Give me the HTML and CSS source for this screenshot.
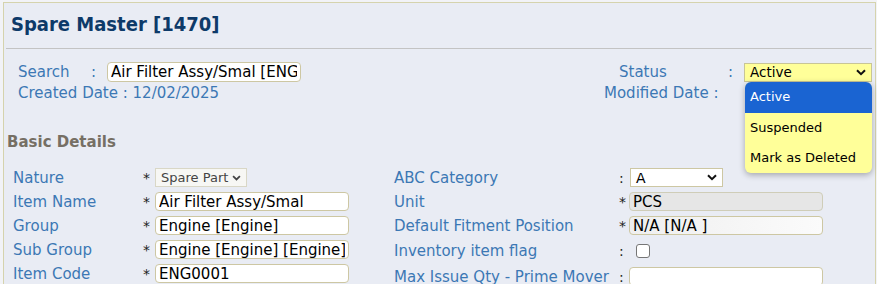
FILE: index.html
```html
<!DOCTYPE html>
<html lang="en">
<head>
    <meta charset="UTF-8">
    <meta name="viewport" content="width=device-width, initial-scale=1.0">
    <title>Spare Master</title>
    <link rel="stylesheet" href="styles.css">
</head>
<body>
    <div class="panel">
        <h1>Spare Master [1470]</h1>
        <hr class="rule">

        <div class="meta">
            <div class="meta-left">
                <div class="meta-row">
                    <span class="meta-label">Search</span>
                    <span class="colon">:</span>
                    <input type="text" class="search-box" value="Air Filter Assy/Smal [ENG0001]">
                </div>
                <div class="meta-row text-row">Created Date : 12/02/2025</div>
            </div>
            <div class="meta-right">
                <div class="meta-row">
                    <span class="status-label">Status</span>
                    <span class="colon">:</span>
                    <div class="status-wrap">
                        <div class="status-select">
                            <span>Active</span>
                            <svg class="chev" width="10" height="7" viewBox="0 0 10 7"><path d="M1 1.2 L5 5.2 L9 1.2" fill="none" stroke="#111" stroke-width="2"/></svg>
                        </div>
                        <ul class="status-menu">
                            <li class="picked">Active</li>
                            <li>Suspended</li>
                            <li>Mark as Deleted</li>
                        </ul>
                    </div>
                </div>
                <div class="meta-row text-row">Modified Date :</div>
            </div>
        </div>

        <h2>Basic Details</h2>

        <div class="form">
            <div class="col col-left">
                <label>Nature</label><span class="mark">*</span>
                <div class="field"><div class="small-select">Spare Part <svg width="9" height="6" viewBox="0 0 10 7"><path d="M1 1.2 L5 5.2 L9 1.2" fill="none" stroke="#444" stroke-width="2"/></svg></div></div>

                <label>Item Name</label><span class="mark">*</span>
                <div class="field"><input type="text" class="box" value="Air Filter Assy/Smal"></div>

                <label>Group</label><span class="mark">*</span>
                <div class="field"><input type="text" class="box" value="Engine [Engine]"></div>

                <label>Sub Group</label><span class="mark">*</span>
                <div class="field"><input type="text" class="box" value="Engine [Engine] [Engine]"></div>

                <label>Item Code</label><span class="mark">*</span>
                <div class="field"><input type="text" class="box" value="ENG0001"></div>
            </div>

            <div class="col col-right">
                <label>ABC Category</label><span class="mark">:</span>
                <div class="field"><div class="abc-select">A <svg width="10" height="7" viewBox="0 0 10 7"><path d="M1 1.2 L5 5.2 L9 1.2" fill="none" stroke="#111" stroke-width="2"/></svg></div></div>

                <label>Unit</label><span class="mark">*</span>
                <div class="field"><input type="text" class="box disabled" value="PCS" disabled></div>

                <label>Default Fitment Position</label><span class="mark">*</span>
                <div class="field"><input type="text" class="box readonly" value="N/A [N/A ]" readonly></div>

                <label>Inventory item flag</label><span class="mark">:</span>
                <div class="field"><span class="check"></span></div>

                <label>Max Issue Qty - Prime Mover</label><span class="mark">:</span>
                <div class="field"><input type="text" class="box" value=""></div>
            </div>
        </div>
    </div>
</body>
</html>
```

FILE: styles.css
```css
body {
    margin: 0;
    background-color: #f2f3f7;
    font-family: "DejaVu Sans", Verdana, sans-serif;
    font-size: 15px;
    overflow: hidden;
}
.panel {
    margin: 2px 1px 0 3px;
    height: 290px;
    background-color: #e9ecf4;
    border: 1px solid #d5d3ad;
    border-bottom: none;
    position: relative;
}
h1 {
    margin: 0;
    padding: 8px 0 0 7px;
    height: 36px;
    font-family: "DejaVu Sans Condensed", "DejaVu Sans", sans-serif;
    font-size: 20px;
    font-weight: bold;
    color: #0d3a69;
    line-height: 26px;
}
.rule {
    margin: 1px 3px 0 2px;
    border: none;
    border-top: 1px solid #c3c3c3;
    height: 0;
}
.meta {
    display: flex;
    justify-content: space-between;
    padding: 13px 0 0 14px;
    color: #3c78b4;
}
.meta-row {
    display: flex;
    align-items: center;
    height: 20px;
}
.text-row {
    height: 22px;
    line-height: 22px;
}
.meta-label {
    width: 73px;
}
.colon {
    width: 16px;
}
.search-box {
    width: 194px;
    height: 20px;
    box-sizing: border-box;
    border: 1px solid #cdc7a3;
    border-radius: 4px;
    padding: 0 3px;
    font: 15px "DejaVu Sans", sans-serif;
    color: #000;
    background: #fff;
}
.meta-right {
    width: 271px;
}
.status-label {
    width: 109px;
    padding-left: 15px;
}
.status-wrap {
    position: relative;
}
.status-select {
    display: flex;
    align-items: center;
    justify-content: space-between;
    width: 128px;
    height: 19px;
    box-sizing: border-box;
    padding: 0 5px;
    background-color: #ffff99;
    border: 1px solid #c8c596;
    font-size: 13.5px;
    color: #000;
}
.status-menu {
    position: absolute;
    top: 19px;
    left: 1px;
    width: 127px;
    margin: 0;
    padding: 0;
    list-style: none;
    background-color: #ffff99;
    border-radius: 6px;
    box-shadow: 0 2px 6px rgba(0, 0, 0, 0.3);
    overflow: hidden;
    z-index: 2;
}
.status-menu li {
    height: 30px;
    line-height: 30px;
    padding-left: 5px;
    font-size: 13px;
    color: #000;
}
.status-menu li.picked {
    height: 31px;
    background-color: #1a64d2;
    color: #fff;
}
h2 {
    margin: 0;
    padding: 29px 0 0 3px;
    height: 24px;
    font-size: 15px;
    font-weight: bold;
    color: #766f64;
}
.form {
    display: flex;
    padding: 11px 0 0 9px;
}
.col {
    display: grid;
    align-items: center;
    row-gap: 5px;
    color: #3c78b4;
}
.col-left {
    grid-template-columns: 130px 12px 194px;
    grid-auto-rows: 19px;
}
.col-right {
    margin-left: 45px;
    grid-template-columns: 225px 10px 194px;
    grid-template-rows: 19px 19px 19px 22px 19px;
    row-gap: 5px;
}
.mark {
    color: #222;
    font-size: 14px;
}
.field {
    display: flex;
    align-items: center;
}
.box {
    width: 194px;
    height: 19px;
    box-sizing: border-box;
    border: 1px solid #cdc7a3;
    border-radius: 4px;
    padding: 0 3px;
    font: 15px "DejaVu Sans", sans-serif;
    color: #000;
    background: #fff;
}
.box.disabled {
    background: #e6e6e6;
    border-color: #cfcdb8;
}
.box.readonly {
    background: linear-gradient(to right, #efefef, #fbfbfb);
}
.small-select {
    display: flex;
    align-items: center;
    gap: 4px;
    height: 19px;
    box-sizing: border-box;
    padding: 0 5px 0 5px;
    border: 1px solid #d9d7c6;
    background: #f7f7f4;
    font-size: 13px;
    color: #444;
}
.abc-select {
    display: flex;
    align-items: center;
    justify-content: space-between;
    width: 93px;
    height: 19px;
    box-sizing: border-box;
    margin-left: 1px;
    padding: 0 5px;
    border: 1px solid #cdc7a3;
    background: #fff;
    font-size: 14px;
    color: #000;
}
.check {
    display: inline-block;
    width: 12px;
    height: 12px;
    margin-left: 7px;
    border: 1px solid #767676;
    border-radius: 3px;
    background: #fff;
}
```
